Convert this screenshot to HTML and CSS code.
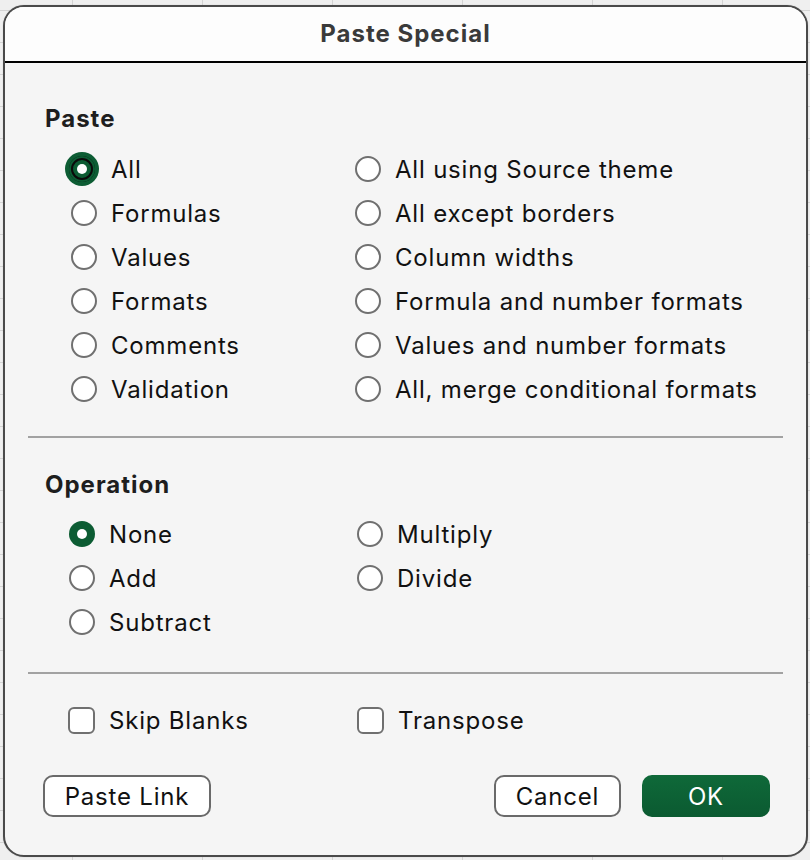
FILE: index.html
```html
<!DOCTYPE html>
<html>
<head>
<meta charset="utf-8">
<link rel="stylesheet" href="styles.css">
</head>
<body>
<div class="dialog">
  <div class="titlebar">Paste Special</div>

  <section class="section paste">
    <h2 class="heading">Paste</h2>
    <div class="grid grid-paste">
      <label class="opt"><span class="radio focused"></span><span>All</span></label>
      <label class="opt"><span class="radio"></span><span>All using Source theme</span></label>
      <label class="opt"><span class="radio"></span><span>Formulas</span></label>
      <label class="opt"><span class="radio"></span><span>All except borders</span></label>
      <label class="opt"><span class="radio"></span><span>Values</span></label>
      <label class="opt"><span class="radio"></span><span>Column widths</span></label>
      <label class="opt"><span class="radio"></span><span>Formats</span></label>
      <label class="opt"><span class="radio"></span><span>Formula and number formats</span></label>
      <label class="opt"><span class="radio"></span><span>Comments</span></label>
      <label class="opt"><span class="radio"></span><span>Values and number formats</span></label>
      <label class="opt"><span class="radio"></span><span>Validation</span></label>
      <label class="opt"><span class="radio"></span><span>All, merge conditional formats</span></label>
    </div>
  </section>

  <hr class="sep sep-1">

  <section class="section operation">
    <h2 class="heading">Operation</h2>
    <div class="grid grid-op">
      <label class="opt"><span class="radio checked"></span><span>None</span></label>
      <label class="opt"><span class="radio"></span><span>Multiply</span></label>
      <label class="opt"><span class="radio"></span><span>Add</span></label>
      <label class="opt"><span class="radio"></span><span>Divide</span></label>
      <label class="opt"><span class="radio"></span><span>Subtract</span></label>
    </div>
  </section>

  <hr class="sep sep-2">

  <div class="grid grid-check">
    <label class="opt"><span class="checkbox"></span><span>Skip Blanks</span></label>
    <label class="opt"><span class="checkbox"></span><span>Transpose</span></label>
  </div>

  <div class="footer">
    <button class="btn btn-link">Paste Link</button>
    <div class="spacer"></div>
    <button class="btn btn-cancel">Cancel</button>
    <button class="btn btn-ok">OK</button>
  </div>
</div>
</body>
</html>
```

FILE: styles.css
```css
* { box-sizing: border-box; }

html, body {
  margin: 0;
  padding: 0;
}

body {
  width: 810px;
  height: 860px;
  overflow: hidden;
  background-color: #efefef;
  background-image:
    linear-gradient(to right, #d4d4d4 1px, transparent 1px),
    linear-gradient(to bottom, #d4d4d4 1px, transparent 1px);
  background-size: 130px 100%, 100% 32px;
  background-position: 72px 0, 0 10px;
  font-family: Inter, "Noto Sans", "Liberation Sans", sans-serif;
  color: #111;
  padding-top: 5px;
  padding-left: 3px;
}

.dialog {
  width: 805px;
  height: 852px;
  border: 2px solid #4a4a4a;
  border-radius: 21px;
  background: #f5f5f5;
  overflow: hidden;
  box-shadow: 0 0 1px rgba(0,0,0,0.3);
}

.titlebar {
  height: 56px;
  line-height: 54px;
  background: #fdfdfd;
  border-bottom: 2px solid #000;
  text-align: center;
  font-size: 24px;
  font-weight: 700;
  color: #3a3a3a;
  letter-spacing: 1px;
}

.heading {
  margin: 0;
  font-size: 24px;
  font-weight: 700;
  line-height: 30px;
  color: #1e1e1e;
  padding-left: 40px;
  letter-spacing: 1px;
}

.paste .heading { margin-top: 41px; }
.operation .heading { margin-top: 32px; }

.grid {
  display: grid;
  grid-auto-rows: 44px;
}

.grid-paste {
  margin-top: 13px;
  padding-left: 66px;
  grid-template-columns: 284px 1fr;
}

.grid-op {
  margin-top: 12px;
  padding-left: 64px;
  grid-template-columns: 288px 1fr;
}

.grid-check {
  margin-top: 24px;
  padding-left: 63px;
  grid-template-columns: 289px 1fr;
}

.opt {
  display: flex;
  align-items: center;
  gap: 14px;
  font-size: 24px;
  letter-spacing: 0.8px;
  color: #111;
  white-space: nowrap;
}

.radio {
  position: relative;
  flex: none;
  width: 26px;
  height: 26px;
  border-radius: 50%;
  border: 2px solid #707070;
  background: #fff;
}

.radio.checked {
  border: none;
  background: #0c5c33;
}

.radio.checked::after,
.radio.focused::after {
  content: "";
  position: absolute;
  left: 50%;
  top: 50%;
  width: 10px;
  height: 10px;
  margin: -5px 0 0 -5px;
  border-radius: 50%;
  background: #fff;
}

.radio.focused {
  border: none;
  background: #0c5c33;
  box-shadow:
    inset 0 0 0 2px #0c5c33,
    inset 0 0 0 4px #0a0a0a,
    0 0 0 4px #0c5c33;
  margin-left: -2px;
  margin-right: 2px;
}

.checkbox {
  flex: none;
  width: 27px;
  height: 27px;
  border-radius: 6px;
  border: 2px solid #707070;
  background: #fff;
}

.sep {
  margin: 0 23px;
  border: none;
  height: 2px;
  background: #a2a2a2;
}

.sep-1 { margin-top: 25px; }
.sep-2 { margin-top: 28px; }

.footer {
  display: flex;
  align-items: center;
  margin-top: 33px;
  padding-left: 38px;
  padding-right: 36px;
  gap: 21px;
}

.spacer { flex: 1; }

.btn {
  height: 42px;
  border-radius: 10px;
  font-family: inherit;
  font-size: 24px;
  letter-spacing: 0.8px;
  padding: 0;
  cursor: default;
}

.btn-link,
.btn-cancel {
  background: #fff;
  border: 2px solid #6a6a6a;
  color: #111;
}

.btn-link { width: 168px; }
.btn-cancel { width: 127px; }

.btn-ok {
  width: 128px;
  border: none;
  color: #fff;
  background: linear-gradient(to bottom, #0f6939, #0b5a31);
}
```
